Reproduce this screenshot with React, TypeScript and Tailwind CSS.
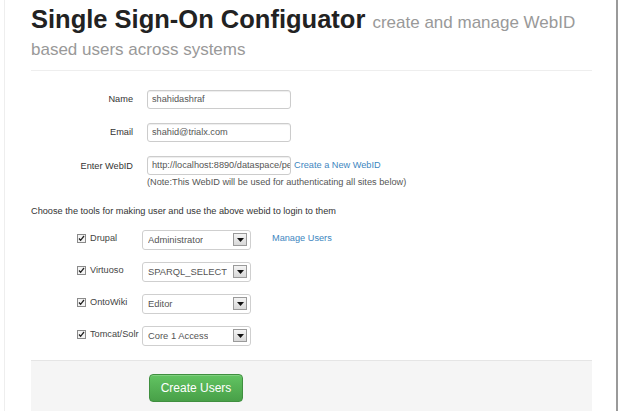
const tools = [
  { name: 'Drupal', role: 'Administrator', link: 'Manage Users' },
  { name: 'Virtuoso', role: 'SPARQL_SELECT' },
  { name: 'OntoWiki', role: 'Editor' },
  { name: 'Tomcat/Solr', role: 'Core 1 Access' },
];

const fields = [
  { label: 'Name', value: 'shahidashraf' },
  { label: 'Email', value: 'shahid@trialx.com' },
];

const SelectBox = ({ value }: { value: string }) => (
  <div className="flex h-[20px] w-[109px] items-center justify-between rounded-[3px] border border-[#cfcfcf] bg-white pl-[5px] pr-[3px] text-[9.4px] text-[#555]">
    <span className="overflow-hidden whitespace-nowrap">{value}</span>
    <span className="ml-[2px] flex h-[13px] w-[14px] shrink-0 items-center justify-center border border-[#9a9a9a] bg-gradient-to-b from-[#f4f4f4] to-[#d8d8d8]">
      <svg width="7" height="4" viewBox="0 0 7 4">
        <path d="M0 0h7L3.5 4z" fill="#111" />
      </svg>
    </span>
  </div>
);

const App = () => {
  return (
    <div className="h-[411px] w-[624px] overflow-hidden bg-white font-['Liberation_Sans',Arial,sans-serif] text-[9.2px] text-[#333]">
      <div className="ml-[4px] h-full w-[614px] border-l border-r-2 border-l-[#eeeeee] border-r-[#9a9a9a] pl-[26px] pr-[24px] pt-[6px]">
        {/* Header */}
        <h1 className="text-[25.5px] font-bold leading-[27px] text-[#222]">
          Single Sign-On Configuator{' '}
          <span className="text-[17px] font-normal leading-[18px] text-[#999]">create and manage WebID based users across systems</span>
        </h1>
        <div className="mt-[10px] border-t border-[#eeeeee]" />

        {/* Account fields */}
        <div className="mt-[19px] flex flex-col gap-[14px]">
          {fields.map((f) => (
            <div key={f.label} className="flex items-center">
              <label className="w-[102px] text-right">{f.label}</label>
              <div className="ml-[14px] flex h-[19px] w-[144px] items-center rounded-[3px] border border-[#cccccc] px-[4px] text-[#555] shadow-[inset_0_1px_1px_rgba(0,0,0,0.075)]">
                {f.value}
              </div>
            </div>
          ))}
          <div className="flex items-start">
            <label className="w-[102px] pt-[4px] text-right">Enter WebID</label>
            <div className="ml-[14px]">
              <div className="flex items-center">
                <div className="flex h-[19px] w-[144px] items-center overflow-hidden whitespace-nowrap rounded-[3px] border border-[#cccccc] px-[4px] text-[#555] shadow-[inset_0_1px_1px_rgba(0,0,0,0.075)]">
                  http://localhost:8890/dataspace/person/shahid
                </div>
                <a className="ml-[3px] text-[#3d86c0]">Create a New WebID</a>
              </div>
              <p className="mt-[1px] text-[#555]">(Note:This WebID will be used for authenticating all sites below)</p>
            </div>
          </div>
        </div>

        <p className="mt-[15px]">Choose the tools for making user and use the above webid to login to them</p>

        {/* Tools */}
        <div className="mt-[11px] flex flex-col gap-[12px] pl-[46px]">
          {tools.map((t) => (
            <div key={t.name} className="flex items-start">
              <label className="flex w-[65px] items-center gap-[4px] whitespace-nowrap pt-[2px] text-[#444]">
                <span className="flex h-[9px] w-[9px] shrink-0 items-center justify-center border border-[#8a8a8a] bg-[#f4f4f4]">
                  <svg width="7" height="7" viewBox="0 0 7 7">
                    <path d="M1 3.5l1.6 1.8L6 1" fill="none" stroke="#222" strokeWidth="1.3" />
                  </svg>
                </span>
                {t.name}
              </label>
              <SelectBox value={t.role} />
              {t.link && <a className="ml-[21px] pt-[2px] text-[#3d86c0]">{t.link}</a>}
            </div>
          ))}
        </div>

        {/* Actions */}
        <div className="mt-[14px] h-[60px] border-t border-[#e5e5e5] bg-[#f5f5f5] pl-[118px] pt-[13px]">
          <button className="h-[28px] w-[94px] rounded-[4px] border border-[#3f8f3f] bg-gradient-to-b from-[#62c462] to-[#48a048] text-[12px] text-white shadow-[inset_0_1px_0_rgba(255,255,255,0.2)]">
            Create Users
          </button>
        </div>
      </div>
    </div>
  );
};

export default App;
